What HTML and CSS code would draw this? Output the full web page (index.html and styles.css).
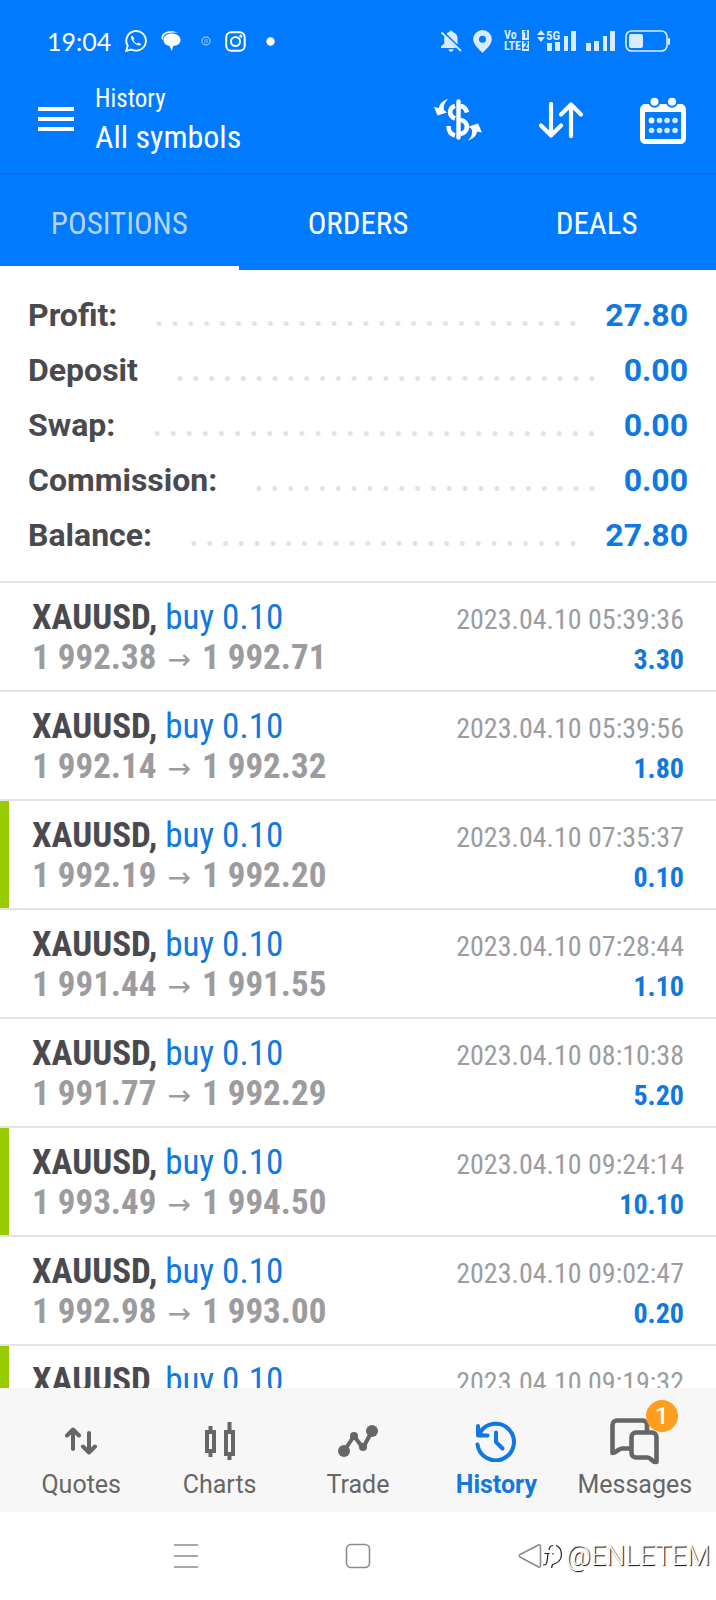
FILE: index.html
```html
<!DOCTYPE html>
<html lang="en">
<head>
<meta charset="utf-8">
<meta name="viewport" content="width=device-width, initial-scale=1">
<title>History</title>
<link rel="stylesheet" href="styles.css">
</head>
<body>
<header class="top">
  <div class="status">
    <div class="status-group">
      <span class="clock">19:04</span>
      <svg class="st-wa" width="22" height="22" viewBox="0 0 22 22" fill="none" stroke="currentColor" stroke-width="1.8"><path d="M1.2 20.8l1.5-5A9.8 9.8 0 1 1 6.600 19.500z"/><path d="M7.300 5.600c-2 1-1.500 4 1.700 7.200s6.300 3.600 7.200 1.500l-2.700-1.800-1.400 1.200c-1.600-.6-3-2-3.700-3.600l1-1.300z" fill="currentColor" stroke="none"/></svg>
      <svg class="st-chat" width="20" height="20" viewBox="0 0 20 20" fill="currentColor"><path d="M.5 7C.5 2.500 5 .3 9 .3c3 0 6 .4 8 1.700C12 1.200 6 1.500 3.500 4 2 5.500 1.800 7 2 9 1 8.500.5 8 .5 7z"/><path d="M2.500 9c0-4 3.500-6.500 8.300-6.500S19.500 5 19.500 9s-3.300 5.800-7.500 6L11 20l-2.500-5C5 14 2.500 12.500 2.500 9z"/></svg>
      <svg class="st-faint" width="10" height="10" viewBox="0 0 10 10" fill="none" stroke="currentColor"><circle cx="5" cy="5" r="4" stroke-width="1.500"/><path d="M3 4h4M3 6h4"/></svg>
      <svg class="st-insta" width="21" height="21" viewBox="0 0 21 21" fill="none" stroke="currentColor" stroke-width="2"><rect x="1.200" y="1.200" width="18.500" height="18.500" rx="5"/><circle cx="10.500" cy="10.500" r="4.500"/><circle cx="15.800" cy="5.200" r=".6"/></svg>
      <svg class="st-dot" width="9" height="9" viewBox="0 0 9 9" fill="currentColor"><circle cx="4.500" cy="4.500" r="4.200"/></svg>
    </div>
    <div class="status-group status-right">
      <svg width="22" height="22" viewBox="0 0 22 22" fill="currentColor"><path d="M11 .5c1 0 1.600.7 1.600 1.600C16 3 17.600 5.600 17.600 9v5.500L6.500 3.700C7.300 2.900 8.300 2.400 9.400 2.100 9.400 1.200 10 .5 11 .5zM4.800 6l11.500 12H1v-1.800l3.200-2.400V9c0-1.200.2-2.200.6-3zM8.500 19.300h5c0 1.400-1 2.400-2.500 2.400s-2.500-1-2.500-2.400z"/><path d="M1.500 2.500l19.500 18.500" stroke="currentColor" stroke-width="1.800"/></svg>
      <svg class="st-pin" width="19" height="23" viewBox="0 0 19 23" fill="currentColor" fill-rule="evenodd"><path d="M9.500 0a9.300 9.300 0 0 1 9.300 9.300C18.800 15 12.500 19.500 9.500 23 6.500 19.500.2 15 .2 9.300A9.300 9.300 0 0 1 9.500 0zm0 5.800a3.500 3.500 0 1 0 0 7 3.500 3.500 0 0 0 0-7z"/></svg>
      <span class="volte"><span>Vo<b>1</b></span><span>LTE<b>2</b></span></span>
      <span class="cell">
        <svg width="8" height="12" viewBox="0 0 8 12" fill="currentColor"><path d="M4 0l4 5H0zM4 12l4-5H0z"/></svg>
        <span class="gen">5G</span>
        <svg class="bars-a" width="29" height="20" viewBox="0 0 29 20" fill="currentColor"><path d="M0 12h5v8H0zM8 10h5v10H8zM17 5h4v15h-4zM24 0h5v20h-5z"/></svg>
      </span>
      <svg class="st-bars" width="29" height="20" viewBox="0 0 29 20" fill="currentColor"><path d="M0 12h5v8H0zM8 10h5v10H8zM17 5h4v15h-4zM24 0h5v20h-5z"/></svg>
      <svg width="45" height="22" viewBox="0 0 45 22"><rect x="1" y="1" width="41" height="20" rx="5.500" fill="none" stroke="currentColor" stroke-width="1.600"/><rect x="4" y="4" width="14" height="14" rx="2" fill="currentColor"/><rect x="43" y="8" width="2" height="7" rx="1" fill="currentColor"/></svg>
    </div>
  </div>
  <div class="appbar">
    <button class="icon-btn" aria-label="Menu"><svg width="36" height="26" viewBox="0 0 36 26" fill="currentColor"><path d="M0 0h36v4H0zM0 10h36v4H0zM0 20h36v4H0z"/></svg></button>
    <div class="heading"><h1>History</h1><p>All symbols</p></div>
    <div class="tools">
      <button class="icon-btn" aria-label="Currency"><svg width="48" height="42" viewBox="0 0 48 42" fill="none" stroke="currentColor" stroke-width="4.600"><path d="M24.500 2.500v36" stroke-width="4.400" stroke-linecap="round"/><path d="M26.500 7C30 7.500 32 9.500 33 13.500M21 7C14.500 9 14.500 17 21 19.500M26.500 21C35 22 35 33.500 26.500 35M21 36.500C17 35.500 14.500 32 14.500 27"/><path d="M14 0C8 2 5.500 5 5 9L0 8l3.500 8.500 9.500-3-3-2.500C9 7 10.500 3.500 14 0zM34 41.500C40 39.500 42.500 36.500 43 32.500l5 1-4-9-9.500 3 3 2.500C39 34 37.500 38 34 41.500z" fill="currentColor" stroke="none"/></svg></button>
      <button class="icon-btn" aria-label="Sort"><svg width="44" height="36" viewBox="0 0 44 36" fill="none" stroke="currentColor" stroke-width="4.200" stroke-linecap="round" stroke-linejoin="round"><path d="M12 2v31.500M2 23.500l10 10 10-10M32 34V2.500M22 12.500l10-10 10 10"/></svg></button>
      <button class="icon-btn" aria-label="Period"><svg width="46" height="47" viewBox="0 0 46 47"><rect x="2.500" y="9.500" width="41" height="35" rx="3" fill="none" stroke="currentColor" stroke-width="5"/><path d="M3 7h40v8H3z" fill="currentColor"/><g fill="currentColor" stroke="#007aff" stroke-width="2"><circle cx="14.500" cy="4.800" r="5"/><circle cx="32" cy="4.800" r="5"/></g><g fill="currentColor"><circle cx="11.500" cy="23.500" r="2.900"/><g opacity=".82"><circle cx="19.500" cy="23.500" r="2.800"/><circle cx="27" cy="23.500" r="2.800"/><circle cx="35" cy="23.500" r="2.800"/><circle cx="11.500" cy="33.500" r="2.800"/><circle cx="19.500" cy="33.500" r="2.800"/><circle cx="27" cy="33.500" r="2.800"/><circle cx="35" cy="33.500" r="2.800"/></g></g></svg></button>
    </div>
  </div>
  <nav class="tabs">
    <button class="tab tab-on">POSITIONS</button>
    <button class="tab">ORDERS</button>
    <button class="tab">DEALS</button>
  </nav>
</header>

<main class="content">
  <dl class="summary">
    <div class="sum-row"><dt>Profit:</dt><dd>27.80</dd></div>
    <div class="sum-row"><dt>Deposit</dt><dd>0.00</dd></div>
    <div class="sum-row"><dt>Swap:</dt><dd>0.00</dd></div>
    <div class="sum-row"><dt>Commission:</dt><dd>0.00</dd></div>
    <div class="sum-row"><dt>Balance:</dt><dd>27.80</dd></div>
  </dl>
  <ul class="deals">
    <li class="deal"><div class="line"><span class="sym"><b>XAUUSD,</b> buy 0.10</span><time>2023.04.10 05:39:36</time></div><div class="line"><span class="prices">1 992.38 <i>→</i> 1 992.71</span><span class="gain">3.30</span></div></li>
    <li class="deal"><div class="line"><span class="sym"><b>XAUUSD,</b> buy 0.10</span><time>2023.04.10 05:39:56</time></div><div class="line"><span class="prices">1 992.14 <i>→</i> 1 992.32</span><span class="gain">1.80</span></div></li>
    <li class="deal marked"><div class="line"><span class="sym"><b>XAUUSD,</b> buy 0.10</span><time>2023.04.10 07:35:37</time></div><div class="line"><span class="prices">1 992.19 <i>→</i> 1 992.20</span><span class="gain">0.10</span></div></li>
    <li class="deal"><div class="line"><span class="sym"><b>XAUUSD,</b> buy 0.10</span><time>2023.04.10 07:28:44</time></div><div class="line"><span class="prices">1 991.44 <i>→</i> 1 991.55</span><span class="gain">1.10</span></div></li>
    <li class="deal"><div class="line"><span class="sym"><b>XAUUSD,</b> buy 0.10</span><time>2023.04.10 08:10:38</time></div><div class="line"><span class="prices">1 991.77 <i>→</i> 1 992.29</span><span class="gain">5.20</span></div></li>
    <li class="deal marked"><div class="line"><span class="sym"><b>XAUUSD,</b> buy 0.10</span><time>2023.04.10 09:24:14</time></div><div class="line"><span class="prices">1 993.49 <i>→</i> 1 994.50</span><span class="gain">10.10</span></div></li>
    <li class="deal"><div class="line"><span class="sym"><b>XAUUSD,</b> buy 0.10</span><time>2023.04.10 09:02:47</time></div><div class="line"><span class="prices">1 992.98 <i>→</i> 1 993.00</span><span class="gain">0.20</span></div></li>
    <li class="deal marked"><div class="line"><span class="sym"><b>XAUUSD,</b> buy 0.10</span><time>2023.04.10 09:19:32</time></div></li>
  </ul>
</main>

<nav class="bottom">
  <a href="#quotes" class="dest"><span class="glyph"><svg width="32" height="28" viewBox="0 0 32 28" fill="none" stroke="currentColor" stroke-width="4" stroke-linecap="round" stroke-linejoin="round"><path d="M8 22V2.500M2 8.500l6-6 6 6M24 6v19.500M18 19.500l6 6 6-6"/></svg></span>Quotes</a>
  <a href="#charts" class="dest"><span class="glyph"><svg width="32" height="38" viewBox="0 0 32 38" fill="none" stroke="currentColor" stroke-width="4"><path d="M3 10h7v19H3zM22 10h7v22h-7zM6.500 4v5M6.500 30v5M25.500 0v9M25.500 32v6"/></svg></span>Charts</a>
  <a href="#trade" class="dest"><span class="glyph"><svg width="40" height="34" viewBox="0 0 40 34" fill="none" stroke="currentColor" stroke-width="4" stroke-linejoin="round"><path d="M6 27L16 12l9 12 9-17"/><g fill="currentColor" stroke="none"><circle cx="6" cy="27" r="6"/><circle cx="34" cy="7" r="6"/><circle cx="16" cy="12" r="4"/><circle cx="25" cy="23" r="4"/></g></svg></span>Trade</a>
  <a href="#history" class="dest dest-on"><span class="glyph"><svg width="42" height="42" viewBox="0 0 42 42" fill="none" stroke="currentColor" stroke-width="4" stroke-linecap="round" stroke-linejoin="round"><path d="M2.500 24.500A18.300 18.300 0 1 0 5 12.500"/><path d="M3 6v9.500h9.500"/><path d="M3 8l7 7.500H3z" fill="currentColor" stroke="none"/><path d="M21 12.500V22l6.500 6.500"/></svg></span>History</a>
  <a href="#messages" class="dest"><span class="glyph"><svg width="50" height="47" viewBox="0 0 50 47" fill="none" stroke="currentColor" stroke-width="4.600" stroke-linejoin="round" stroke-linecap="round"><path d="M37 13V7a4.500 4.500 0 0 0-4.500-4.500H7A4.500 4.500 0 0 0 2.500 7v28c4-.5 6-4.500 9.500-4.500h8"/><path d="M26 14.500h16a4.500 4.500 0 0 1 4.500 4.500v25c-5 .5-5-4.500-9-4.500H26a4.500 4.500 0 0 1-4.500-4.500V19a4.500 4.500 0 0 1 4.500-4.500z"/></svg><span class="badge">1</span></span>Messages</a>
</nav>

<footer class="system">
  <button class="sys-btn" aria-label="Recent apps"><svg width="24" height="24" viewBox="0 0 24 24" fill="none" stroke="currentColor" stroke-width="1.600"><path d="M0 1h24M0 12h24M0 23h24"/></svg></button>
  <button class="sys-btn" aria-label="Home"><svg width="26" height="26" viewBox="0 0 26 26" fill="none" stroke="currentColor" stroke-width="1.600"><rect x="1.500" y="1.500" width="23" height="23" rx="4.500"/></svg></button>
  <button class="sys-btn" aria-label="Back"><svg width="24" height="26" viewBox="0 0 24 26" fill="none" stroke="currentColor" stroke-width="1.600" stroke-linejoin="round"><path d="M2 11.500L20.500 2q2-.5 2 1.500v19q0 2-2 1.500L2 14q-1.500-1.200 0-2.500z"/></svg></button>
  <div class="mark">
    <svg width="22" height="26" viewBox="0 0 22 26" fill="none" stroke="#222" stroke-width="1.200"><path d="M1 22c3 0 4-1 4-4l1-7M2.500 10.500h5M7 7c.5-3 2-4.500 4-4.500M14 2.500c6 2 7 11 3 15.500-2 2.500-5 3-6.500 3.500l-1 3.500M11 10v1.500"/></svg>
    <span>@ENLETEM</span>
  </div>
</footer>
</body>
</html>
```
FILE: styles.css
```css
:root {
  --blue: #007aff;
  --link: #1078e0;
  --ink: #4a4a4e;
  --muted: #9c9ca0;
  --rule: #e3e3e4;
  --narrow: "Roboto Condensed", "Liberation Sans Narrow", Roboto, sans-serif;
}

* { box-sizing: border-box; }

body {
  margin: 0;
  height: 100vh;
  display: flex;
  flex-direction: column;
  background: #fff;
  color: var(--ink);
  font-family: Roboto, sans-serif;
}

button {
  border: 0;
  padding: 0;
  background: none;
  color: inherit;
  font: inherit;
}

svg { display: block; flex: none; }
h1, p, dl, dd, ul { margin: 0; padding: 0; }

.top { background: var(--blue); color: #fff; flex: none; }

.status {
  display: flex;
  justify-content: space-between;
  align-items: center;
  height: 82px;
  padding: 0 46px 0 47px;
}
.status-group { display: flex; align-items: center; }
.status-right { color: #d9ebff; }
.clock { font-family: Lato, sans-serif; font-size: 25px; line-height: 32px; margin-right: 14px; }
.st-chat { margin-left: 14px; }
.st-faint { margin-left: 20px; opacity: .5; }
.st-insta { margin-left: 14px; }
.st-dot { margin-left: 20px; }
.st-pin { margin: 0 12px 0 11px; }
.volte {
  display: grid;
  width: 25px;
  font: 700 12px/11px var(--narrow);
}
.volte span { display: flex; justify-content: space-between; }
.volte b { background: #d9ebff; color: var(--blue); padding: 0 1px; line-height: 10px; height: 10px; font-size: 10px; }
.cell { position: relative; display: flex; width: 39px; height: 22px; margin-left: 8px; }
.gen { font: 700 13px/12px var(--narrow); margin-left: 1px; }
.bars-a { position: absolute; right: 0; bottom: 1px; clip-path: polygon(0 11px, 14px 11px, 14px 0, 100% 0, 100% 100%, 0 100%); }
.st-bars { margin: 0 10px; }

.appbar {
  display: flex;
  align-items: center;
  height: 91px;
  padding: 0 30px 15px 38px;
}
.heading { flex: 1; margin-left: 21px; font-family: var(--narrow); }
.heading h1 { font-size: 25px; line-height: 34px; font-weight: 400; }
.heading p { font-size: 32px; line-height: 42px; }
.tools { display: flex; align-items: center; gap: 57px; }

.tabs { display: flex; height: 97px; border-top: 2px solid #0672ef; }
.tab {
  flex: 1;
  padding-top: 5px;
  border-bottom: 4px solid transparent;
  font-family: var(--narrow);
  font-size: 31px;
}
.tab-on { color: #b8d3f1; border-color: #fff; }

.content { flex: 1; min-height: 0; overflow: hidden; }
.summary { padding: 18px 28px 18px; border-bottom: 2px solid var(--rule); }
.sum-row { display: flex; align-items: center; font-size: 32px; line-height: 55px; font-weight: 700; }
.sum-row dd { flex: 1; display: flex; color: var(--link); }
.sum-row dd::before {
  content: "";
  flex: 1;
  height: 5px;
  margin: 33px 24px 0 34px;
  background: radial-gradient(circle, #e2e2e2 2px, transparent 3px) 0 0 / 16px 5px round;
}

.deals { list-style: none; }
.deal {
  height: 109px;
  padding: 16px 32px 0;
  border-bottom: 2px solid var(--rule);
  font-family: var(--narrow);
}
.marked { box-shadow: inset 9px 0 #9c0; }
.line { display: flex; justify-content: space-between; align-items: baseline; line-height: 38px; }
.sym { font-size: 35px; color: var(--link); }
.sym b { color: var(--ink); }
.line time { font-size: 28px; color: var(--muted); }
.prices { font-size: 35px; font-weight: 700; color: var(--muted); }
.prices i { font: 400 28px "DejaVu Sans", sans-serif; margin: 0 3px; }
.gain { font-size: 28px; font-weight: 700; color: var(--link); }

.bottom { display: flex; flex: none; height: 124px; padding: 0 12px; background: #f7f7f7; }
.dest {
  flex: 1 1 0;
  min-width: 0;
  display: flex;
  flex-direction: column;
  align-items: center;
  padding-top: 26px;
  color: #666;
  font-size: 25px;
  line-height: 34px;
  text-decoration: none;
}
.dest-on { color: var(--link); font-weight: 700; }
.glyph { position: relative; display: flex; align-items: center; height: 54px; }
.badge {
  position: absolute;
  top: -14px;
  right: -18px;
  width: 32px;
  border-radius: 50%;
  background: #ff9d1c;
  color: #fff;
  font-size: 24px;
  font-weight: 500;
  line-height: 32px;
  text-align: center;
}

.system {
  position: relative;
  display: flex;
  flex: none;
  justify-content: center;
  align-items: center;
  gap: 147px;
  height: 88px;
  color: #8c8c8c;
}
.mark {
  position: absolute;
  right: 6px;
  display: flex;
  align-items: center;
  gap: 2px;
  color: #fff;
  font-size: 27px;
  font-weight: 300;
  text-shadow: 1px 1px 1px #000;
}
```
